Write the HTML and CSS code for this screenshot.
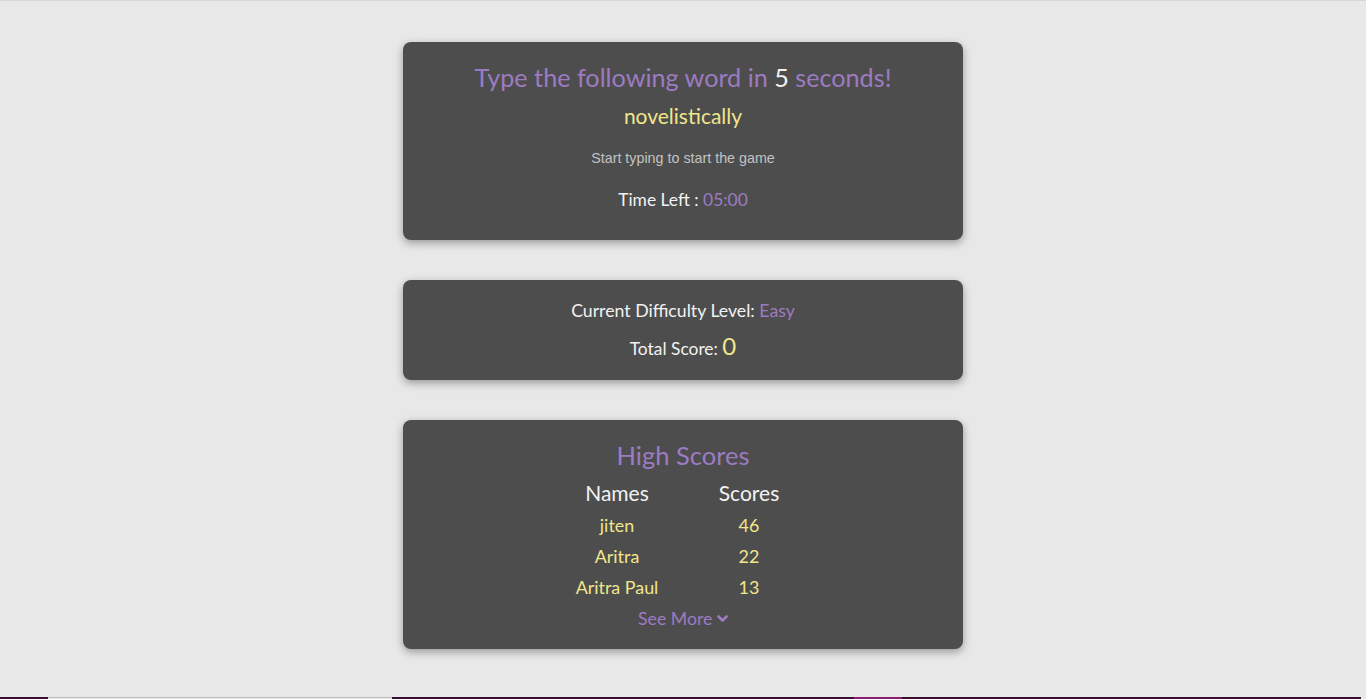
FILE: index.html
```html
<!DOCTYPE html>
<html>
<head>
<meta charset="utf-8">
<link rel="stylesheet" href="styles.css">
</head>
<body>
<div class="topline"></div>
<main class="page">
  <section class="card game">
    <h1 class="prompt">Type the following word in <span class="secs">5</span> seconds!</h1>
    <p class="word">novelistically</p>
    <p class="hint">Start typing to start the game</p>
    <p class="time">Time Left : <span class="purple">05:00</span></p>
  </section>
  <section class="card stats">
    <p class="level">Current Difficulty Level: <span class="purple">Easy</span></p>
    <p class="score">Total Score: <span class="scorenum">0</span></p>
  </section>
  <section class="card high">
    <h2 class="hs-title">High Scores</h2>
    <table class="hs-table">
      <thead><tr><th>Names</th><th>Scores</th></tr></thead>
      <tbody>
        <tr><td>jiten</td><td>46</td></tr>
        <tr><td>Aritra</td><td>22</td></tr>
        <tr><td>Aritra Paul</td><td>13</td></tr>
      </tbody>
    </table>
    <p class="more">See More <svg class="chev" width="11" height="8" viewBox="0 0 11 8"><path d="M1.5 1.5 L5.5 5.5 L9.5 1.5" fill="none" stroke="#9d7bc2" stroke-width="2.6" stroke-linecap="round" stroke-linejoin="round"/></svg></p>
  </section>
</main>
<footer class="strip">
  <span class="seg dark s1"></span>
  <span class="seg light s2"></span>
  <span class="seg dark s3"></span>
  <span class="seg pink s4"></span>
  <span class="seg dark s5"></span>
  <span class="seg light s6"></span>
</footer>
</body>
</html>
```

FILE: styles.css
```css
html, body {
  margin: 0;
  padding: 0;
  background: #e8e8e8;
  font-family: Lato, "Liberation Sans", sans-serif;
  height: 699px;
  overflow: hidden;
}
body {
  display: flex;
  flex-direction: column;
}
.topline {
  height: 1px;
  background: #d7d7d7;
  flex: none;
}
.page {
  display: flex;
  flex-direction: column;
  align-items: center;
  gap: 40px;
  padding-top: 41px;
  flex: 1;
}
.card {
  width: 560px;
  box-sizing: border-box;
  background: #4d4d4d;
  border-radius: 8px;
  box-shadow: 0 3px 8px rgba(0,0,0,0.35);
  text-align: center;
  color: #f2f2f2;
}
p, h1, h2 { margin: 0; font-weight: normal; }
.purple { color: #9d7bc2; }
.game { height: 198px; padding-top: 19px; }
.prompt {
  font-size: 25.2px;
  color: #9d7bc2;
  line-height: 32px;
}
.secs { color: #f2f2f2; }
.word {
  color: #f0e68c;
  font-size: 21px;
  line-height: 28px;
  margin-top: 9px;
}
.hint {
  font-family: "Liberation Sans", Arial, sans-serif;
  font-size: 14.3px;
  color: #c2c2c2;
  margin-top: 20px;
  line-height: 16px;
}
.time {
  font-size: 17.4px;
  line-height: 22px;
  margin-top: 23px;
}
.stats { height: 100px; padding-top: 20px; }
.level { font-size: 17.7px; line-height: 22px; }
.score { font-size: 17.4px; line-height: 28px; margin-top: 10px; }
.scorenum { color: #f0e68c; font-size: 24px; }
.high { height: 229px; padding-top: 19px; }
.hs-title {
  font-size: 25.5px;
  line-height: 32px;
  color: #9d7bc2;
}
.hs-table {
  margin: 7px auto 0;
  border-collapse: collapse;
  table-layout: fixed;
  width: 264px;
}
.hs-table th {
  font-weight: normal;
  font-size: 21px;
  line-height: 26px;
  padding: 2px 0 4px;
  color: #f2f2f2;
}
.hs-table td {
  color: #f0e68c;
  font-size: 17.9px;
  line-height: 21px;
  padding: 5px 0;
  white-space: nowrap;
}
.more {
  color: #9d7bc2;
  font-size: 17.7px;
  line-height: 22px;
  margin-top: 5px;
}
.chev { vertical-align: 2px; }
.strip {
  flex: none;
  height: 2px;
  display: flex;
}
.seg { display: block; height: 2px; }
.dark { background: #3b0f31; }
.light { background: #ececec; border-top: 1px solid #bdbdbd; box-sizing: border-box; }
.pink { background: #8d1f70; }
.s1 { width: 48px; }
.s2 { width: 344px; }
.s3 { width: 462px; }
.s4 { width: 48px; }
.s5 { width: 459px; }
.s6 { flex: 1; background: #e8e8e8; border: 0; }
```
